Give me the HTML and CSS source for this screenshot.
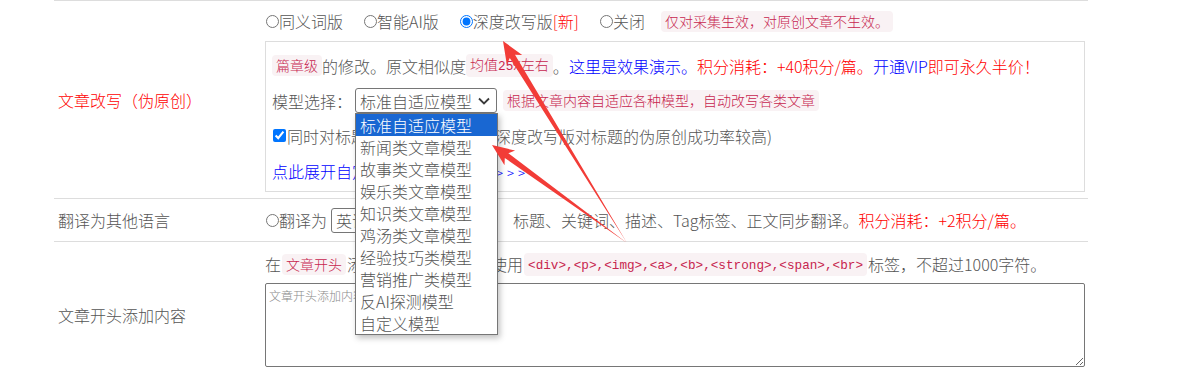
FILE: index.html
```html
<!DOCTYPE html>
<html lang="zh-CN">
<head>
    <meta charset="UTF-8">
    <meta name="viewport" content="width=device-width, initial-scale=1.0">
    <title>采集设置</title>
    <link rel="stylesheet" href="styles.css">
</head>
<body>
    <div class="form">
        <div class="row">
            <div class="label red">文章改写（伪原创）</div>
            <div class="field">
                <div class="options">
                    <label class="opt"><input type="radio" name="rewrite">同义词版</label>
                    <label class="opt"><input type="radio" name="rewrite">智能AI版</label>
                    <label class="opt"><input type="radio" name="rewrite" checked>深度改写版<span class="red">[新]</span></label>
                    <label class="opt"><input type="radio" name="rewrite">关闭</label>
                    <code class="tip first">仅对采集生效，对原创文章不生效。</code>
                </div>
                <div class="box">
                    <div class="line"><code class="tip">篇章级</code>的修改。原文相似度<code class="tip">均值<span class="mono">25%</span>左右</code>。<a class="blue">这里是效果演示。</a><span class="red">积分消耗：+40积分/篇。</span><a class="blue">开通VIP</a><span class="red">即可永久半价！</span></div>
                    <div class="line">
                        模型选择：
                        <div class="select model">
                            <span>标准自适应模型</span>
                            <svg class="chev" width="12" height="8" viewBox="0 0 12 8"><polyline points="1,1.5 6,6.5 11,1.5" fill="none" stroke="#3a3a3a" stroke-width="1.8"/></svg>
                            <ul class="menu">
                                <li class="active">标准自适应模型</li>
                                <li>新闻类文章模型</li>
                                <li>故事类文章模型</li>
                                <li>娱乐类文章模型</li>
                                <li>知识类文章模型</li>
                                <li>鸡汤类文章模型</li>
                                <li>经验技巧类模型</li>
                                <li>营销推广类模型</li>
                                <li>反AI探测模型</li>
                                <li>自定义模型</li>
                            </ul>
                        </div>
                        <code class="tip">根据文章内容自适应各种模型，自动改写各类文章</code>
                    </div>
                    <div class="line"><label class="opt"><input type="checkbox" checked>同时对标题进行伪原创处理（深度改写版对标题的伪原创成功率较高)</label></div>
                    <div class="line"><a class="blue">点此展开自定义伪原创高级设置<span class="more">&gt;&gt;&gt;</span></a></div>
                </div>
            </div>
        </div>
        <div class="row">
            <div class="label">翻译为其他语言</div>
            <div class="field single">
                <div class="options">
                    <label class="opt"><input type="radio" name="translate">翻译为</label>
                    <div class="select lang">
                        <span>英语</span>
                        <svg class="chev" width="12" height="8" viewBox="0 0 12 8"><polyline points="1,1.5 6,6.5 11,1.5" fill="none" stroke="#3a3a3a" stroke-width="1.8"/></svg>
                    </div>
                    <span class="after-select">标题、关键词、描述、Tag标签、正文同步翻译。<span class="red">积分消耗：+2积分/篇。</span></span>
                </div>
            </div>
        </div>
        <div class="row">
            <div class="label">文章开头添加内容</div>
            <div class="field last">
                <div class="options">
                    在<code class="tip near">文章开头</code>添加的内容，仅支持使用<code class="tip near"><span class="mono tags">&lt;div&gt;,&lt;p&gt;,&lt;img&gt;,&lt;a&gt;,&lt;b&gt;,&lt;strong&gt;,&lt;span&gt;,&lt;br&gt;</span></code>标签，不超过1000字符。
                </div>
                <textarea class="text" placeholder="文章开头添加内容，支持HTML代码"></textarea>
            </div>
        </div>
    </div>

    <!-- annotation arrows drawn over the screenshot -->
    <svg class="marks" width="1203" height="379" viewBox="0 0 1203 379">
        <polygon points="503,41 506.8,64.5 509.8,57.9 627,243 515.0,54.7 522.2,55.0" fill="#f23c37"/>
        <polygon points="492,145 504.5,165.2 504.8,158.0 627,243 508.4,153.2 515.1,150.6" fill="#f23c37"/>
    </svg>
</body>
</html>
```

FILE: styles.css
```css
body {
    margin: 0;
    font-family: "Noto Sans CJK SC", "Microsoft YaHei", sans-serif;
    font-size: 16px;
    font-weight: 300;
    color: #555;
    position: relative;
    overflow: hidden;
}
.form {
    width: 1034px;
    margin-left: 54px;
    border-top: 1px solid #ddd;
}
.row {
    display: grid;
    grid-template-columns: 203px 1fr;
    border-bottom: 1px solid #ddd;
}
.label {
    display: flex;
    align-items: center;
    padding-left: 4px;
}
.field {
    padding: 7px 3px 6px 8px;
}
.field.single {
    padding: 8px 3px 8px 8px;
}
.field.last {
    padding: 9px 3px 20px 8px;
}
.red {
    color: #f00;
}
.blue {
    color: #00f;
    cursor: pointer;
}
.options {
    display: flex;
    align-items: center;
    height: 26px;
    white-space: nowrap;
}
.opt {
    display: flex;
    align-items: center;
    margin-right: 20px;
}
.opt input {
    margin: 0 0 0 1px;
}
.opt input[type="checkbox"] {
    margin-right: 1px;
}
.tip {
    display: inline-block;
    padding: 2px 4px;
    line-height: 17px;
    font-family: "Noto Sans CJK SC", sans-serif;
    font-size: 14px;
    color: #c7254e;
    background-color: #f9f2f4;
    border-radius: 4px;
}
.tip.first {
    margin-left: -4px;
}
.tip.near {
    margin: 0 1px;
}
.mono {
    font-family: "Liberation Mono", monospace;
    font-size: 12.7px;
    font-weight: 400;
}
.box {
    margin-top: 7px;
    border: 1px solid #ddd;
    padding: 6px 6px 3px 6px;
}
.line {
    display: flex;
    align-items: center;
    height: 35px;
    white-space: nowrap;
}
.select {
    position: relative;
    display: flex;
    align-items: center;
    justify-content: space-between;
    box-sizing: border-box;
    height: 25px;
    padding: 0 6px 0 4px;
    border: 1px solid #767676;
    border-radius: 3px;
    background: #fff;
}
.select.model {
    width: 142px;
    margin: 0 6px 0 3px;
}
.select.lang {
    width: 165px;
    margin: 0 17px 0 -16px;
}
.chev {
    display: block;
}
.menu {
    position: absolute;
    top: calc(100% + 1px);
    left: -1px;
    width: 143px;
    box-sizing: border-box;
    margin: 0;
    padding: 0;
    list-style: none;
    background: #fff;
    border: 1px solid #767676;
    box-shadow: 2px 3px 6px rgba(0, 0, 0, 0.25);
    z-index: 10;
}
.menu li {
    height: 22px;
    line-height: 22px;
    padding-left: 4px;
    color: #555;
}
.menu li.active {
    background-color: #1967d2;
    color: #fff;
}
.more {
    font-size: 13px;
    letter-spacing: 4px;
}
.text {
    display: block;
    box-sizing: border-box;
    width: 820px;
    height: 84px;
    margin-top: 6px;
    padding: 3px 3px;
    border: 1px solid #767676;
    border-radius: 2px;
    font-family: "Noto Sans CJK SC", sans-serif;
    font-size: 12px;
    font-weight: 300;
}
.text::placeholder {
    color: #8a8a8a;
}
.marks {
    position: absolute;
    top: 0;
    left: 0;
    pointer-events: none;
    z-index: 20;
}
```
